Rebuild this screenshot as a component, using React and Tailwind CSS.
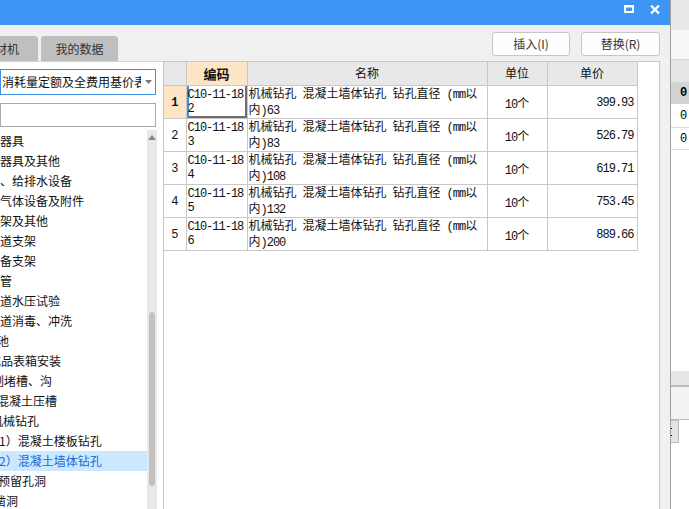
import React from "react";

const FONT = { fontFamily: '"Noto Sans CJK SC", "Noto Sans", sans-serif' };
const MONO = { fontFamily: '"Liberation Mono", "Noto Sans CJK SC", monospace' };

const tree = [
  ["器具", 0],
  ["器具及其他", 0],
  ["、给排水设备", 0],
  ["气体设备及附件", 0],
  ["架及其他", 0],
  ["道支架", 0],
  ["备支架", 0],
  ["管", 0],
  ["道水压试验", 0],
  ["道消毒、冲洗", 0],
  ["池", -3],
  ["成品表箱安装", -11],
  ["剔堵槽、沟", -8],
  ["混凝土压槽", -3],
  ["机械钻孔", -9],
  ["（1）混凝土楼板钻孔", -13],
  ["（2）混凝土墙体钻孔", -13],
  ["预留孔洞", -2],
  ["凿洞", -6],
];

const rows = [
  { code: "C10-11-182", size: "63", price: "399.93" },
  { code: "C10-11-183", size: "83", price: "526.79" },
  { code: "C10-11-184", size: "108", price: "619.71" },
  { code: "C10-11-185", size: "132", price: "753.45" },
  { code: "C10-11-186", size: "200", price: "889.66" },
];

function TitleBar() {
  return (
    <div className="h-[25px] bg-[#3d95f6] flex items-start justify-end pr-[10px] pt-[5px] gap-[16px] shrink-0">
      <svg width="10" height="8" viewBox="0 0 10 8">
        <rect x="1" y="1.5" width="8" height="5.5" fill="none" stroke="#fff" strokeWidth="2" />
        <rect x="0" y="0" width="10" height="2" fill="#fff" />
      </svg>
      <svg width="10" height="9" viewBox="0 0 10 9">
        <path d="M1 0.5 L9 8.5 M9 0.5 L1 8.5" stroke="#fff" strokeWidth="2.2" />
      </svg>
    </div>
  );
}

function LeftPanel() {
  return (
    <div className="w-[163px] shrink-0 flex flex-col">
      <div className="h-[36px] pt-[11px] flex gap-[3px] shrink-0">
        <div className="w-[38px] h-[25px] bg-[#bfbfbf] rounded-tr-[3px] overflow-hidden flex items-center text-[12px] text-[#333]">
          <span className="ml-[-5px]">材机</span>
        </div>
        <div className="w-[77px] h-[25px] bg-[#bfbfbf] rounded-t-[3px] flex items-center justify-center text-[12px] text-[#333]">
          我的数据
        </div>
      </div>
      <div className="flex-1 bg-white border-t border-[#d4d4d4] flex flex-col min-h-0">
        <div className="mt-[7px] w-[156px] h-[26px] border border-[#3d8fe8] flex items-center shrink-0">
          <div className="w-[140px] overflow-hidden whitespace-nowrap text-[12px] text-[#111] pl-[1px]">
            消耗量定额及全费用基价表
          </div>
          <svg width="7" height="4" viewBox="0 0 7 4" className="ml-[4px]">
            <path d="M0 0 H7 L3.5 4 Z" fill="#777" />
          </svg>
        </div>
        <div className="mt-[8px] w-[156px] h-[24px] border border-[#a9a9a9] bg-white shrink-0"></div>
        <div className="flex-1 flex mt-[3px] min-h-0">
          <div className="w-[147px] overflow-hidden pt-[1px]">
            {tree.map(([t, off], i) => (
              <div
                key={i}
                className={
                  "h-[20px] flex items-center whitespace-nowrap text-[12px] " +
                  (i === 16 ? "bg-[#cce8ff] text-[#1769d6]" : "text-[#111]")
                }
              >
                <span style={{ marginLeft: off }}>{t}</span>
              </div>
            ))}
          </div>
          <div className="w-[10px] bg-[#e8e8e8] flex flex-col items-center">
            <svg width="8" height="5" viewBox="0 0 8 5" className="mt-[5px]">
              <path d="M0 5 H8 L4 0 Z" fill="#888" />
            </svg>
            <div className="mt-[172px] w-[6px] h-[174px] rounded-[3px] bg-[#c2c2c2]"></div>
          </div>
        </div>
      </div>
    </div>
  );
}

function Table() {
  const cell = "border border-[#c8c8c8]";
  return (
    <table className="table-fixed border-collapse text-[12px] text-[#111]">
      <colgroup>
        <col className="w-[22px]" />
        <col className="w-[61px]" />
        <col className="w-[240px]" />
        <col className="w-[60px]" />
        <col className="w-[90px]" />
      </colgroup>
      <thead>
        <tr className="h-[23px]">
          <th className={cell + " border-t-0 border-l-0 bg-[#e8e8e8]"}></th>
          <th className={cell + " border-t-0 bg-[#fde5c6] font-bold text-[13px]"}>编码</th>
          <th className={cell + " border-t-0 bg-[#e8e8e8] font-normal"}>名称</th>
          <th className={cell + " border-t-0 bg-[#e8e8e8] font-normal"}>单位</th>
          <th className={cell + " border-t-0 bg-[#e8e8e8] font-normal"}>单价</th>
        </tr>
      </thead>
      <tbody>
        {rows.map((r, i) => (
          <tr key={i} className="h-[33px]">
            <td
              className={
                cell +
                " border-l-0 text-center align-middle pt-[3px] " +
                (i === 0 ? "bg-[#fde5c6] font-bold" : "")
              }
              style={MONO}
            >
              {i + 1}
            </td>
            <td
              className={
                cell +
                " align-middle pl-[1px] leading-[14px] " +
                (i === 0 ? "shadow-[inset_2px_0_0_#3d8fe8,inset_-2px_-2px_0_#6e6e6e]" : "")
              }
              style={{ ...MONO, letterSpacing: "-1px" }}
            >
              <div>{r.code.slice(0, 9)}</div>
              <div>{r.code.slice(9)}</div>
            </td>
            <td className={cell + " align-middle pl-[1px] leading-[14px] whitespace-nowrap overflow-hidden"}>
              <div>
                机械钻孔{"\u2002"}混凝土墙体钻孔{"\u2002"}钻孔直径{"\u2002"}
                <span style={MONO} className="tracking-[-1px]">(mm</span>以
              </div>
              <div>
                内<span style={MONO} className="tracking-[-1px]">){r.size}</span>
              </div>
            </td>
            <td className={cell + " text-center align-middle pt-[4px]"}>
              <span style={MONO} className="tracking-[-1px]">10</span>个
            </td>
            <td
              className={cell + " text-right align-middle pt-[3px] pr-[3px] tracking-[-1px]"}
              style={MONO}
            >
              {r.price}
            </td>
          </tr>
        ))}
      </tbody>
    </table>
  );
}

function RightPanel() {
  return (
    <div className="flex-1 flex flex-col min-w-0">
      <div className="h-[36px] pt-[7px] pr-[10px] flex justify-end gap-[11px] shrink-0">
        <button className="w-[78px] h-[24px] bg-[#fdfdfd] border border-[#c6c6c6] rounded-[3px] text-[12px] text-[#333]">
          插入(I)
        </button>
        <button className="w-[79px] h-[24px] bg-[#fdfdfd] border border-[#c6c6c6] rounded-[3px] text-[12px] text-[#333]">
          替换(R)
        </button>
      </div>
      <div className="flex-1 mr-[10px] bg-white border-t border-l border-r border-[#c8c8c8] overflow-hidden">
        <Table />
      </div>
    </div>
  );
}

function RightStrip() {
  return (
    <div className="flex-1 flex flex-col bg-white text-[12px]" style={MONO}>
      <div className="h-[30px] bg-[#e9e9e9]"></div>
      <div className="h-[30px] bg-[#f6f6f6] border-b border-[#d6d6d6]"></div>
      <div className="h-[22px] bg-[#e6e6e6]"></div>
      <div className="h-[22px] bg-[#d3d3d3] font-bold pl-[9px] flex items-center">0</div>
      <div className="h-[24px] border-b border-[#dcdcdc] pl-[9px] flex items-center">0</div>
      <div className="h-[22px] border-b border-[#dcdcdc] pl-[9px] flex items-center">0</div>
      <div className="h-[221px]"></div>
      <div className="h-[14px] bg-[#e6e6e6]"></div>
      <div className="h-[2px] bg-[#bdbdbd]"></div>
      <div className="h-[33px] bg-[#f3f3f3] border-b border-[#bcbcbc]"></div>
      <div className="w-[8px] h-[23px] bg-[#e4e4e4] border border-l-0 border-[#bcbcbc] flex flex-col justify-center gap-[6px]">
        <div className="w-[1px] h-[1px] bg-black"></div>
        <div className="w-[1px] h-[1px] bg-black"></div>
      </div>
    </div>
  );
}

export default function App() {
  return (
    <div className="w-[689px] h-[509px] flex overflow-hidden bg-white" style={FONT}>
      <div className="w-[671px] shrink-0 flex flex-col border-r border-[#a0a0a0] bg-[#f0f0f0]">
        <TitleBar />
        <div className="flex-1 flex min-h-0">
          <LeftPanel />
          <RightPanel />
        </div>
      </div>
      <RightStrip />
    </div>
  );
}
